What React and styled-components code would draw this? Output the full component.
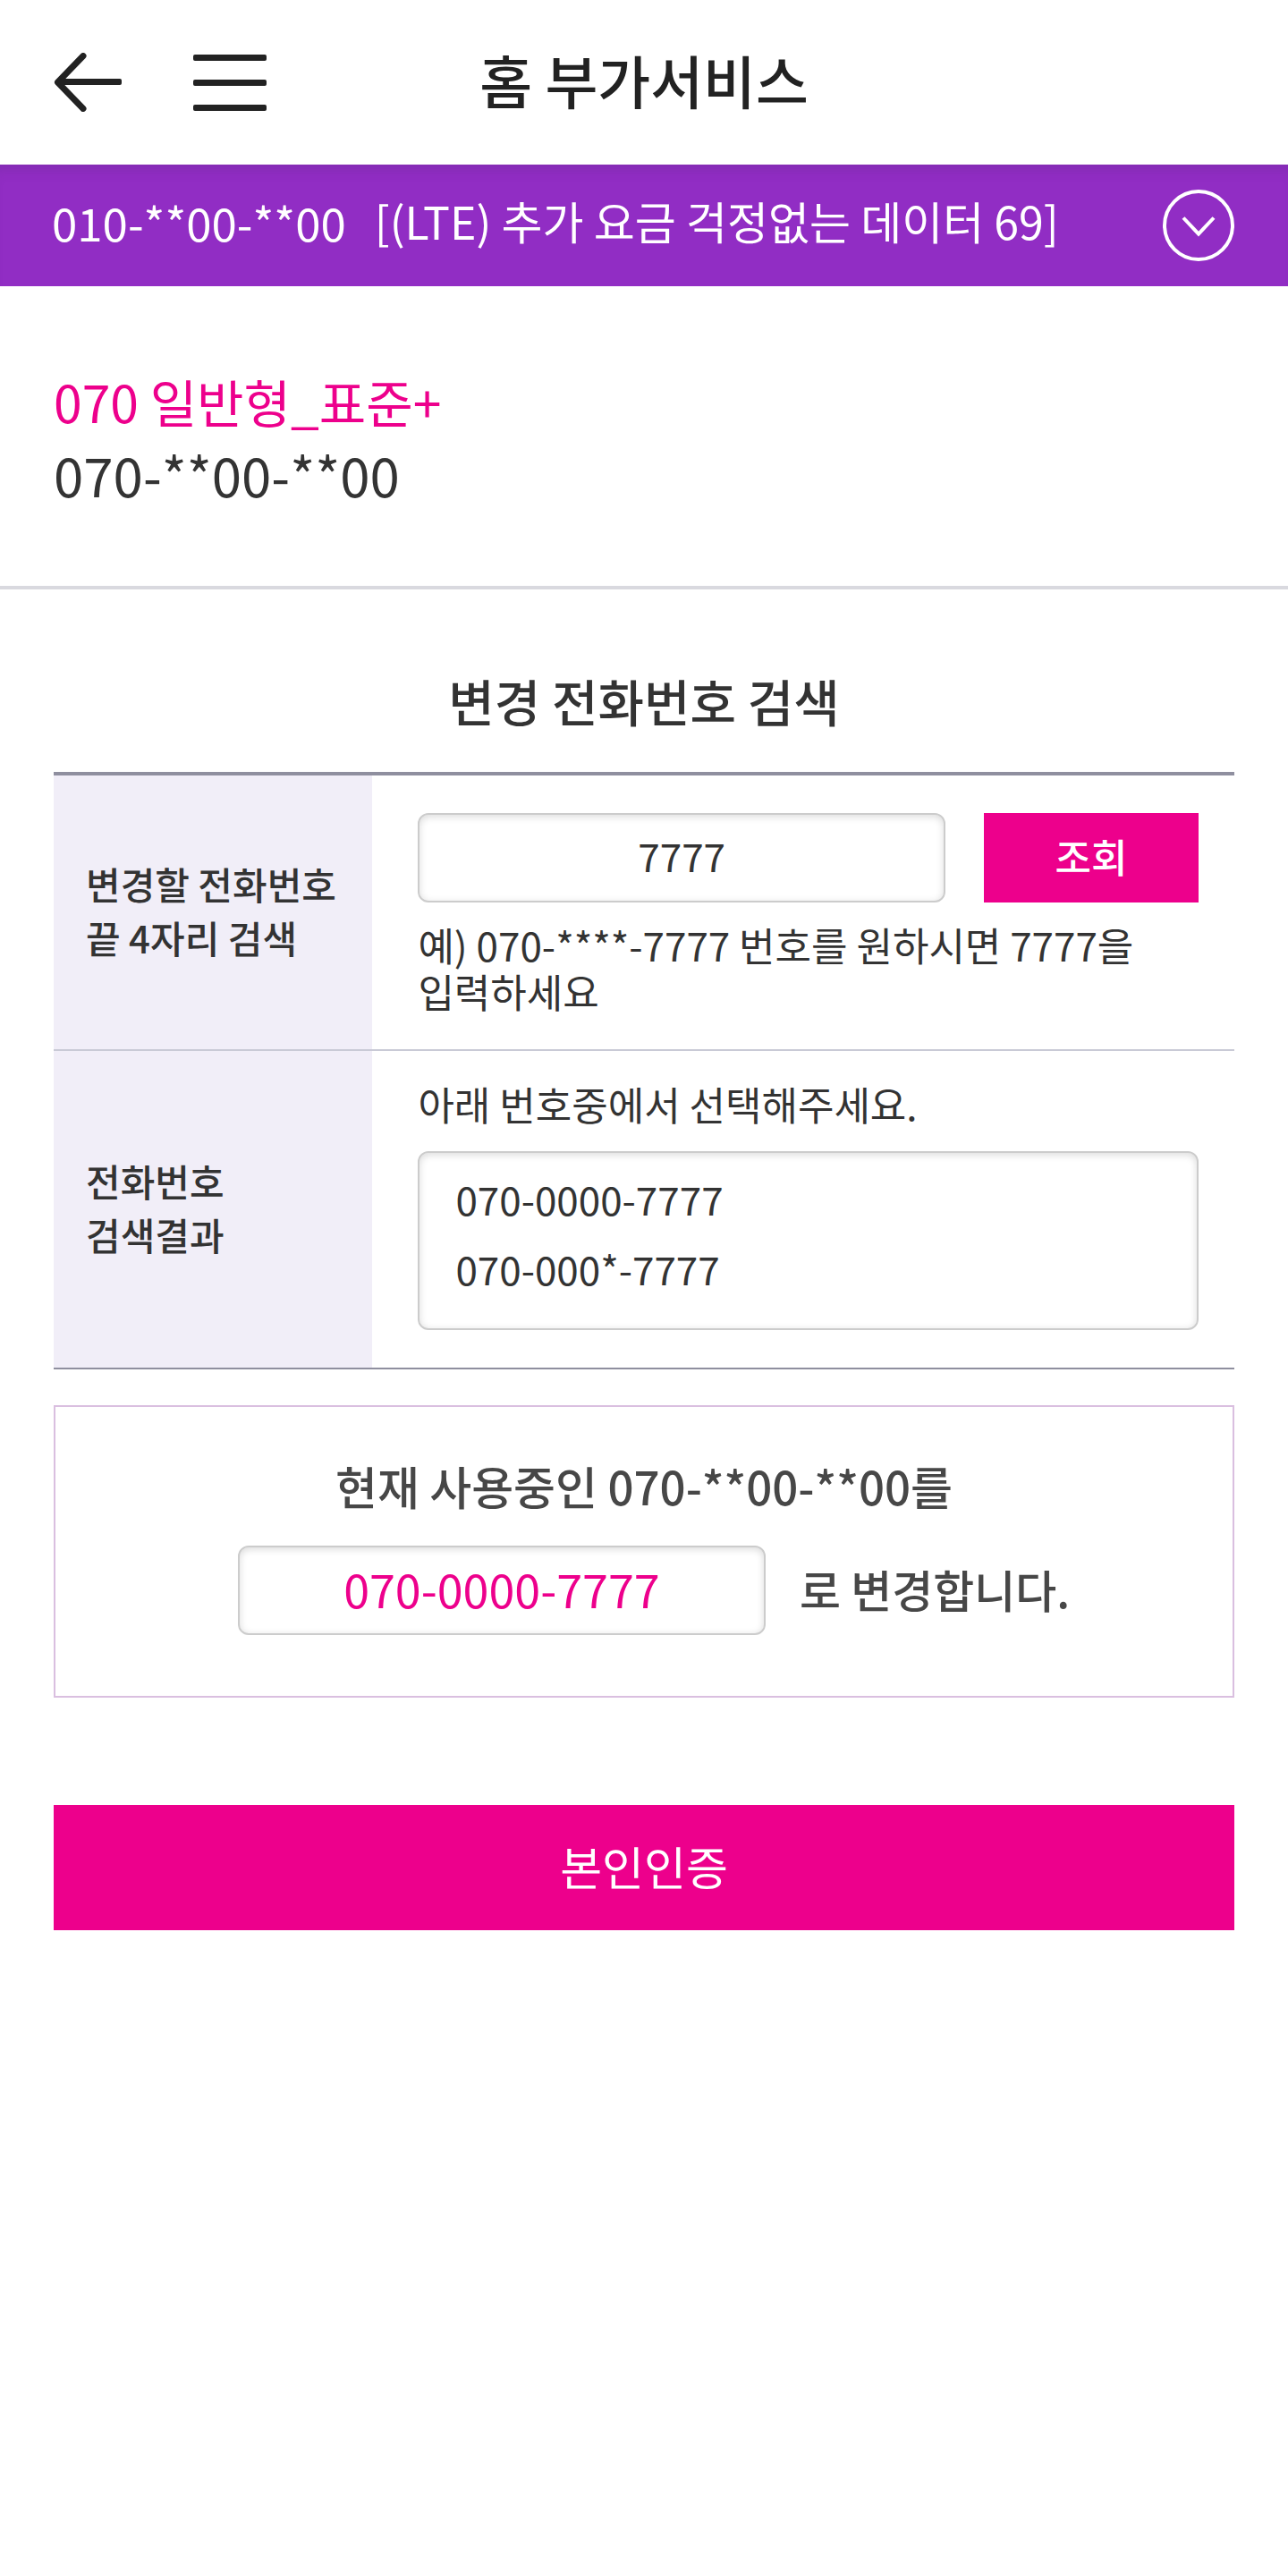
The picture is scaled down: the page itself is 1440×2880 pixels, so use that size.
import React, { useState } from "react";
import styled, { createGlobalStyle } from "styled-components";

const PINK = "#ed008c";
const INK = "#333";

const GlobalStyle = createGlobalStyle`
  *, *::before, *::after { box-sizing: border-box; }
  body {
    margin: 0;
    background: #fff;
    color: ${INK};
    font-family: "Noto Sans CJK KR", sans-serif;
    word-break: keep-all;
  }
  button, input { font-family: inherit; margin: 0; }
  h1, h2, p, ul { margin: 0; padding: 0; }
`;

const Header = styled.header`
  display: grid;
  grid-template-columns: 1fr auto 1fr;
  align-items: center;
  height: 184px;
  padding: 0 60px;
`;

const HeaderTools = styled.nav`
  display: flex;
  align-items: center;
  gap: 80px;
`;

const IconButton = styled.button`
  display: flex;
  padding: 0;
  border: 0;
  background: none;
  color: ${(p) => p.$color || "#222"};
  cursor: pointer;
`;

const PageTitle = styled.h1`
  padding-bottom: 8px;
  font-size: 64px;
  line-height: 84px;
  font-weight: 500;
  color: #222;
`;

const LineBar = styled.div`
  display: flex;
  align-items: center;
  height: 136px;
  padding: 0 60px 0 58px;
  background: #912dc4;
  box-shadow: inset 0 16px 16px -12px rgba(60, 40, 90, 0.2);
  color: #fff;
`;

const LineInfo = styled.div`
  display: flex;
  flex: 1;
  align-items: center;
  gap: 32px;
  padding-bottom: 8px;
  line-height: 76px;
`;

const LineNumber = styled.span`
  font-size: 51px;
`;

const LinePlan = styled.span`
  padding-bottom: 4px;
  font-size: 50px;
`;

const Product = styled.section`
  padding: 87px 60px 84px;
  border-bottom: 4px solid #d9d9df;
  font-size: 60px;
  line-height: 82px;
`;

const ProductName = styled.p`
  color: ${PINK};
  font-size: 57px;
`;

const Content = styled.main`
  padding: 82px 60px;
`;

const SectionTitle = styled.h2`
  margin-bottom: 38px;
  font-size: 56px;
  line-height: 84px;
  font-weight: 500;
  text-align: center;
`;

const FormTable = styled.table`
  width: 100%;
  table-layout: fixed;
  border-collapse: separate;
  border-spacing: 0;
  border-top: 4px solid #8f8f9f;
  border-bottom: 2px solid #8f8f9f;
  tr + tr > * { border-top: 2px solid #c9cad6; }
`;

const LabelCell = styled.th`
  width: 27%;
  padding: 0 0 4px 36px;
  background: #f1eef8;
  font-size: 42px;
  line-height: 60px;
  font-weight: 500;
  text-align: left;
`;

const FieldCell = styled.td`
  padding: ${(p) => p.$pad} 40px ${(p) => p.$padBottom} 51px;
  font-size: 44px;
  line-height: 52px;
`;

const SearchRow = styled.div`
  display: flex;
  gap: 43px;
  margin-bottom: 21px;
`;

const TextField = styled.input`
  flex: ${(p) => (p.$width ? "none" : "1")};
  width: ${(p) => p.$width || "auto"};
  min-width: 0;
  height: 100px;
  padding: 0 24px 6px;
  border: 2px solid #ccc;
  border-radius: 12px;
  background: #fff;
  box-shadow: inset 0 2px 8px rgba(0, 0, 0, 0.15);
  color: ${(p) => p.$color || INK};
  font-size: ${(p) => p.$size || "44px"};
  text-align: center;
  outline: none;
`;

const LookupButton = styled.button`
  width: 240px;
  height: 100px;
  padding: 0 0 4px;
  border: 0;
  background: ${PINK};
  color: #fff;
  font-size: 44px;
  font-weight: 500;
  cursor: pointer;
`;

const ResultList = styled.ul`
  height: 200px;
  margin-top: 27px;
  padding: 12px 40px;
  overflow: auto;
  border: 2px solid #ccc;
  border-radius: 12px;
  box-shadow: inset 0 2px 8px rgba(0, 0, 0, 0.15);
  list-style: none;
`;

const ResultButton = styled.button`
  display: block;
  width: 100%;
  padding: 0;
  border: 0;
  background: none;
  color: ${INK};
  font-size: 44px;
  line-height: 78px;
  text-align: left;
  cursor: pointer;
`;

const Summary = styled.section`
  margin-top: 40px;
  padding: 50px 20px 68px;
  border: 2px solid #dabfe0;
  color: #474747;
  font-size: 51px;
  line-height: 76px;
  font-weight: 500;
  text-align: center;
`;

const SummaryRow = styled.div`
  display: flex;
  align-items: center;
  justify-content: center;
  gap: 38px;
  margin-top: 29px;
  padding-left: 22px;
`;

const SummaryTail = styled.span`
  padding-bottom: 4px;
  font-size: 50px;
`;

const SubmitButton = styled.button`
  display: block;
  width: 100%;
  height: 140px;
  margin-top: 120px;
  padding: 0 0 4px;
  border: 0;
  background: ${PINK};
  color: #fff;
  font-size: 51px;
  cursor: pointer;
`;

const BackIcon = () => (
  <svg width="76" height="66" viewBox="0 0 76 66" fill="none" stroke="currentColor" strokeWidth="7">
    <path d="M33 3.5 4.5 33 33 62.5" strokeLinecap="round" strokeLinejoin="round" />
    <rect x="7" y="29" width="69" height="7" rx="2" fill="currentColor" stroke="none" />
  </svg>
);

const MenuIcon = () => (
  <svg width="82" height="66" viewBox="0 0 82 66" fill="currentColor">
    <rect y="2" width="82" height="7" rx="2" />
    <rect y="30" width="82" height="7" rx="2" />
    <rect y="58" width="82" height="7" rx="2" />
  </svg>
);

const ExpandIcon = () => (
  <svg width="80" height="80" viewBox="0 0 80 80" fill="none" stroke="currentColor" strokeWidth="4">
    <circle cx="40" cy="40" r="38" />
    <path d="M23 31.5 40 49.5 57 31.5" />
  </svg>
);

const RESULTS = ["070-0000-7777", "070-000*-7777"];

export default function App() {
  const [digits, setDigits] = useState("7777");
  const [chosen, setChosen] = useState(RESULTS[0]);

  return (
    <>
      <GlobalStyle />
      <Header>
        <HeaderTools>
          <IconButton type="button" aria-label="뒤로"><BackIcon /></IconButton>
          <IconButton type="button" aria-label="메뉴"><MenuIcon /></IconButton>
        </HeaderTools>
        <PageTitle>홈 부가서비스</PageTitle>
      </Header>

      <LineBar>
        <LineInfo>
          <LineNumber>010-**00-**00</LineNumber>
          <LinePlan>[(LTE) 추가 요금 걱정없는 데이터 69]</LinePlan>
        </LineInfo>
        <IconButton type="button" $color="#fff" aria-label="회선 선택"><ExpandIcon /></IconButton>
      </LineBar>

      <Product>
        <ProductName>070 일반형_표준+</ProductName>
        <p>070-**00-**00</p>
      </Product>

      <Content>
        <SectionTitle>변경 전화번호 검색</SectionTitle>
        <FormTable>
          <tbody>
            <tr>
              <LabelCell scope="row">
                <label htmlFor="digits">변경할 전화번호<br />끝 4자리 검색</label>
              </LabelCell>
              <FieldCell $pad="42px" $padBottom="39px">
                <SearchRow>
                  <TextField id="digits" value={digits} maxLength={4} inputMode="numeric" onChange={(e) => setDigits(e.target.value)} />
                  <LookupButton type="button">조회</LookupButton>
                </SearchRow>
                <p>예) 070-****-7777 번호를 원하시면 7777을 입력하세요</p>
              </FieldCell>
            </tr>
            <tr>
              <LabelCell scope="row">전화번호<br />검색결과</LabelCell>
              <FieldCell $pad="33px" $padBottom="42px">
                <p>아래 번호중에서 선택해주세요.</p>
                <ResultList>
                  {RESULTS.map((number) => (
                    <li key={number}>
                      <ResultButton type="button" onClick={() => setChosen(number)}>{number}</ResultButton>
                    </li>
                  ))}
                </ResultList>
              </FieldCell>
            </tr>
          </tbody>
        </FormTable>

        <Summary>
          <p>현재 사용중인 070-**00-**00를</p>
          <SummaryRow>
            <TextField $width="590px" $size="52px" $color={PINK} value={chosen} readOnly aria-label="변경할 번호" />
            <SummaryTail>로 변경합니다.</SummaryTail>
          </SummaryRow>
        </Summary>

        <SubmitButton type="button">본인인증</SubmitButton>
      </Content>
    </>
  );
}
